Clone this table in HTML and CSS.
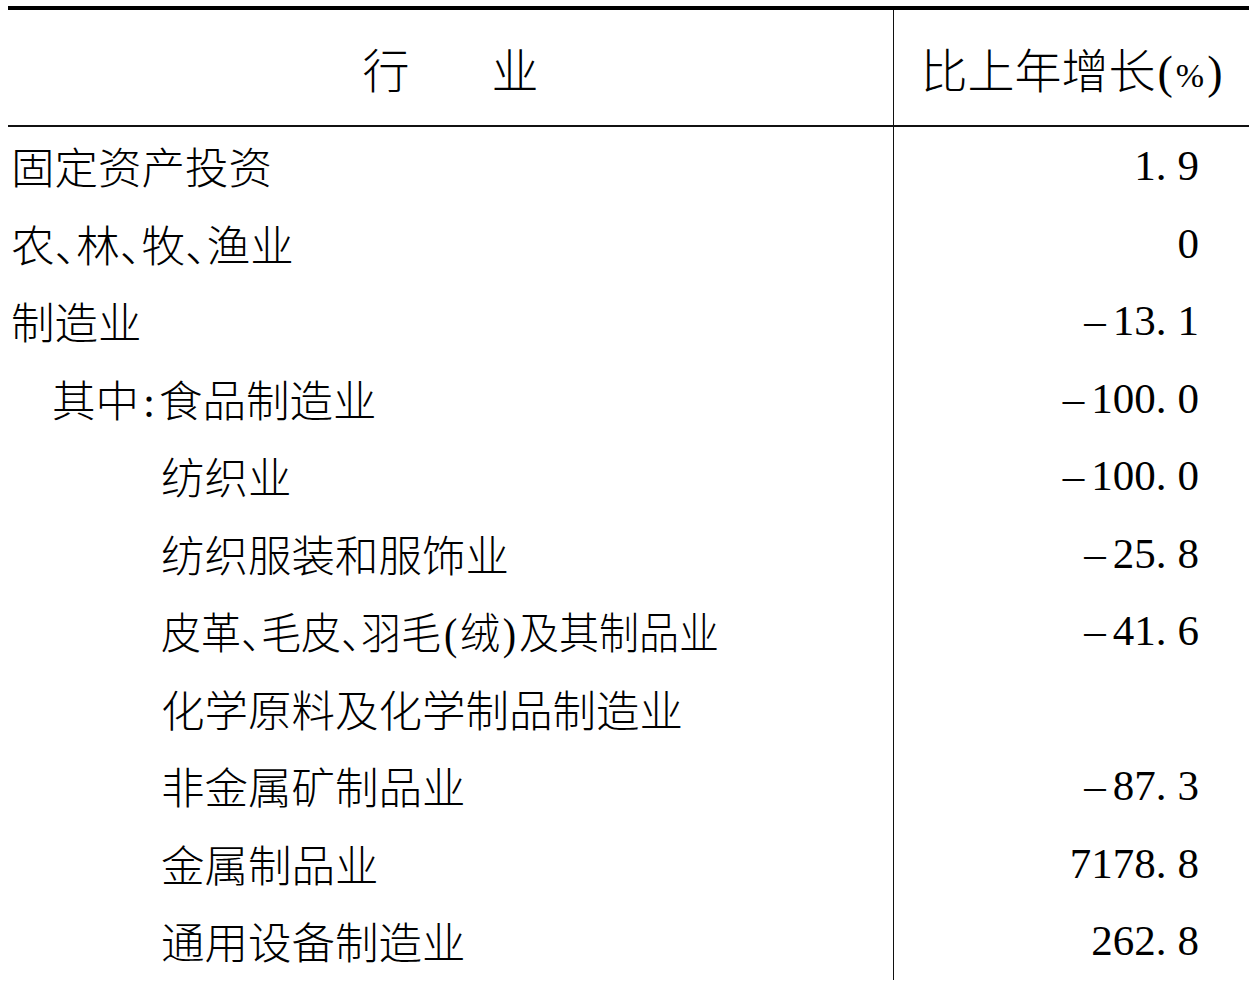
FILE: index.html
```html
<!DOCTYPE html>
<html lang="zh-CN">
<head>
<meta charset="utf-8">
<title>行业 比上年增长</title>
<link rel="stylesheet" href="styles.css">
</head>
<body>
<table class="stat">
  <thead>
    <tr>
      <th class="col-name">行<span class="gap">　　</span>业</th>
      <th class="col-val">比上年增长<span class="unit">(<span class="pct">%</span>)</span></th>
    </tr>
  </thead>
  <tbody>
    <tr><td class="name">固定资产投资</td><td class="val">1<span class="dot">.</span>9</td></tr>
    <tr><td class="name">农<span class="p">、</span>林<span class="p">、</span>牧<span class="p">、</span>渔业</td><td class="val">0</td></tr>
    <tr><td class="name">制造业</td><td class="val"><span class="minus">–</span>13<span class="dot">.</span>1</td></tr>
    <tr><td class="name lvl1">其中<span class="colon">:</span>食品制造业</td><td class="val"><span class="minus">–</span>100<span class="dot">.</span>0</td></tr>
    <tr><td class="name lvl2">纺织业</td><td class="val"><span class="minus">–</span>100<span class="dot">.</span>0</td></tr>
    <tr><td class="name lvl2">纺织服装和服饰业</td><td class="val"><span class="minus">–</span>25<span class="dot">.</span>8</td></tr>
    <tr><td class="name lvl2"><span class="condensed">皮革<span class="p">、</span>毛皮<span class="p">、</span>羽毛<span class="paren">(</span>绒<span class="paren">)</span>及其制品业</span></td><td class="val"><span class="minus">–</span>41<span class="dot">.</span>6</td></tr>
    <tr><td class="name lvl2">化学原料及化学制品制造业</td><td class="val"></td></tr>
    <tr><td class="name lvl2">非金属矿制品业</td><td class="val"><span class="minus">–</span>87<span class="dot">.</span>3</td></tr>
    <tr><td class="name lvl2">金属制品业</td><td class="val">7178<span class="dot">.</span>8</td></tr>
    <tr><td class="name lvl2">通用设备制造业</td><td class="val">262<span class="dot">.</span>8</td></tr>
  </tbody>
</table>
</body>
</html>
```

FILE: styles.css
```css
html, body {
  margin: 0;
  padding: 0;
  background: #fff;
  overflow: hidden;
}
body {
  padding: 6px 3px 0 8px;
  color: #000;
  font-family: "Liberation Serif", "Noto Sans CJK SC", serif;
}
.stat {
  width: 1240px;
  border-collapse: collapse;
  table-layout: fixed;
  border-top: 4px solid #000;
}
.col-name { width: 885px; }
.col-val { width: 355px; }
.stat th {
  height: 115px;
  padding: 0;
  font-weight: 300;
  font-size: 47px;
  text-align: center;
  border-bottom: 2px solid #111;
  font-family: "Noto Sans CJK SC", sans-serif;
}
.stat th.col-val {
  border-left: 1.5px solid #111;
  padding-left: 0;
}
.gap { font-size: 41px; }
.unit {
  font-family: "Liberation Serif", serif;
  font-weight: 400;
  font-size: 46px;
  margin-left: 2px;
}
.pct {
  font-size: 34px;
  margin: 0 3px;
  vertical-align: 1px;
}
.stat td {
  height: 77.5px;
  padding: 0;
  vertical-align: middle;
}
.name {
  font-family: "Noto Sans CJK SC", sans-serif;
  font-weight: 300;
  font-size: 43.5px;
  padding-left: 3px !important;
  white-space: nowrap;
}
.condensed {
  display: inline-block;
  transform: scaleX(0.92);
  transform-origin: left center;
}
.p { font-feature-settings: "halt" 1; }
.paren { font-family: "Liberation Serif", serif; margin: 0 3px; }
.lvl1 { padding-left: 44px !important; }
.lvl2 { padding-left: 153px !important; }
.colon { font-family: "Liberation Serif", serif; margin: 0 4px; }
.val {
  border-left: 1.5px solid #111;
  text-align: right;
  padding-right: 50px !important;
  font-family: "Liberation Serif", serif;
  font-size: 43px;
}
.dot { margin-right: 11px; }
.minus { margin-right: 7px; }
```
